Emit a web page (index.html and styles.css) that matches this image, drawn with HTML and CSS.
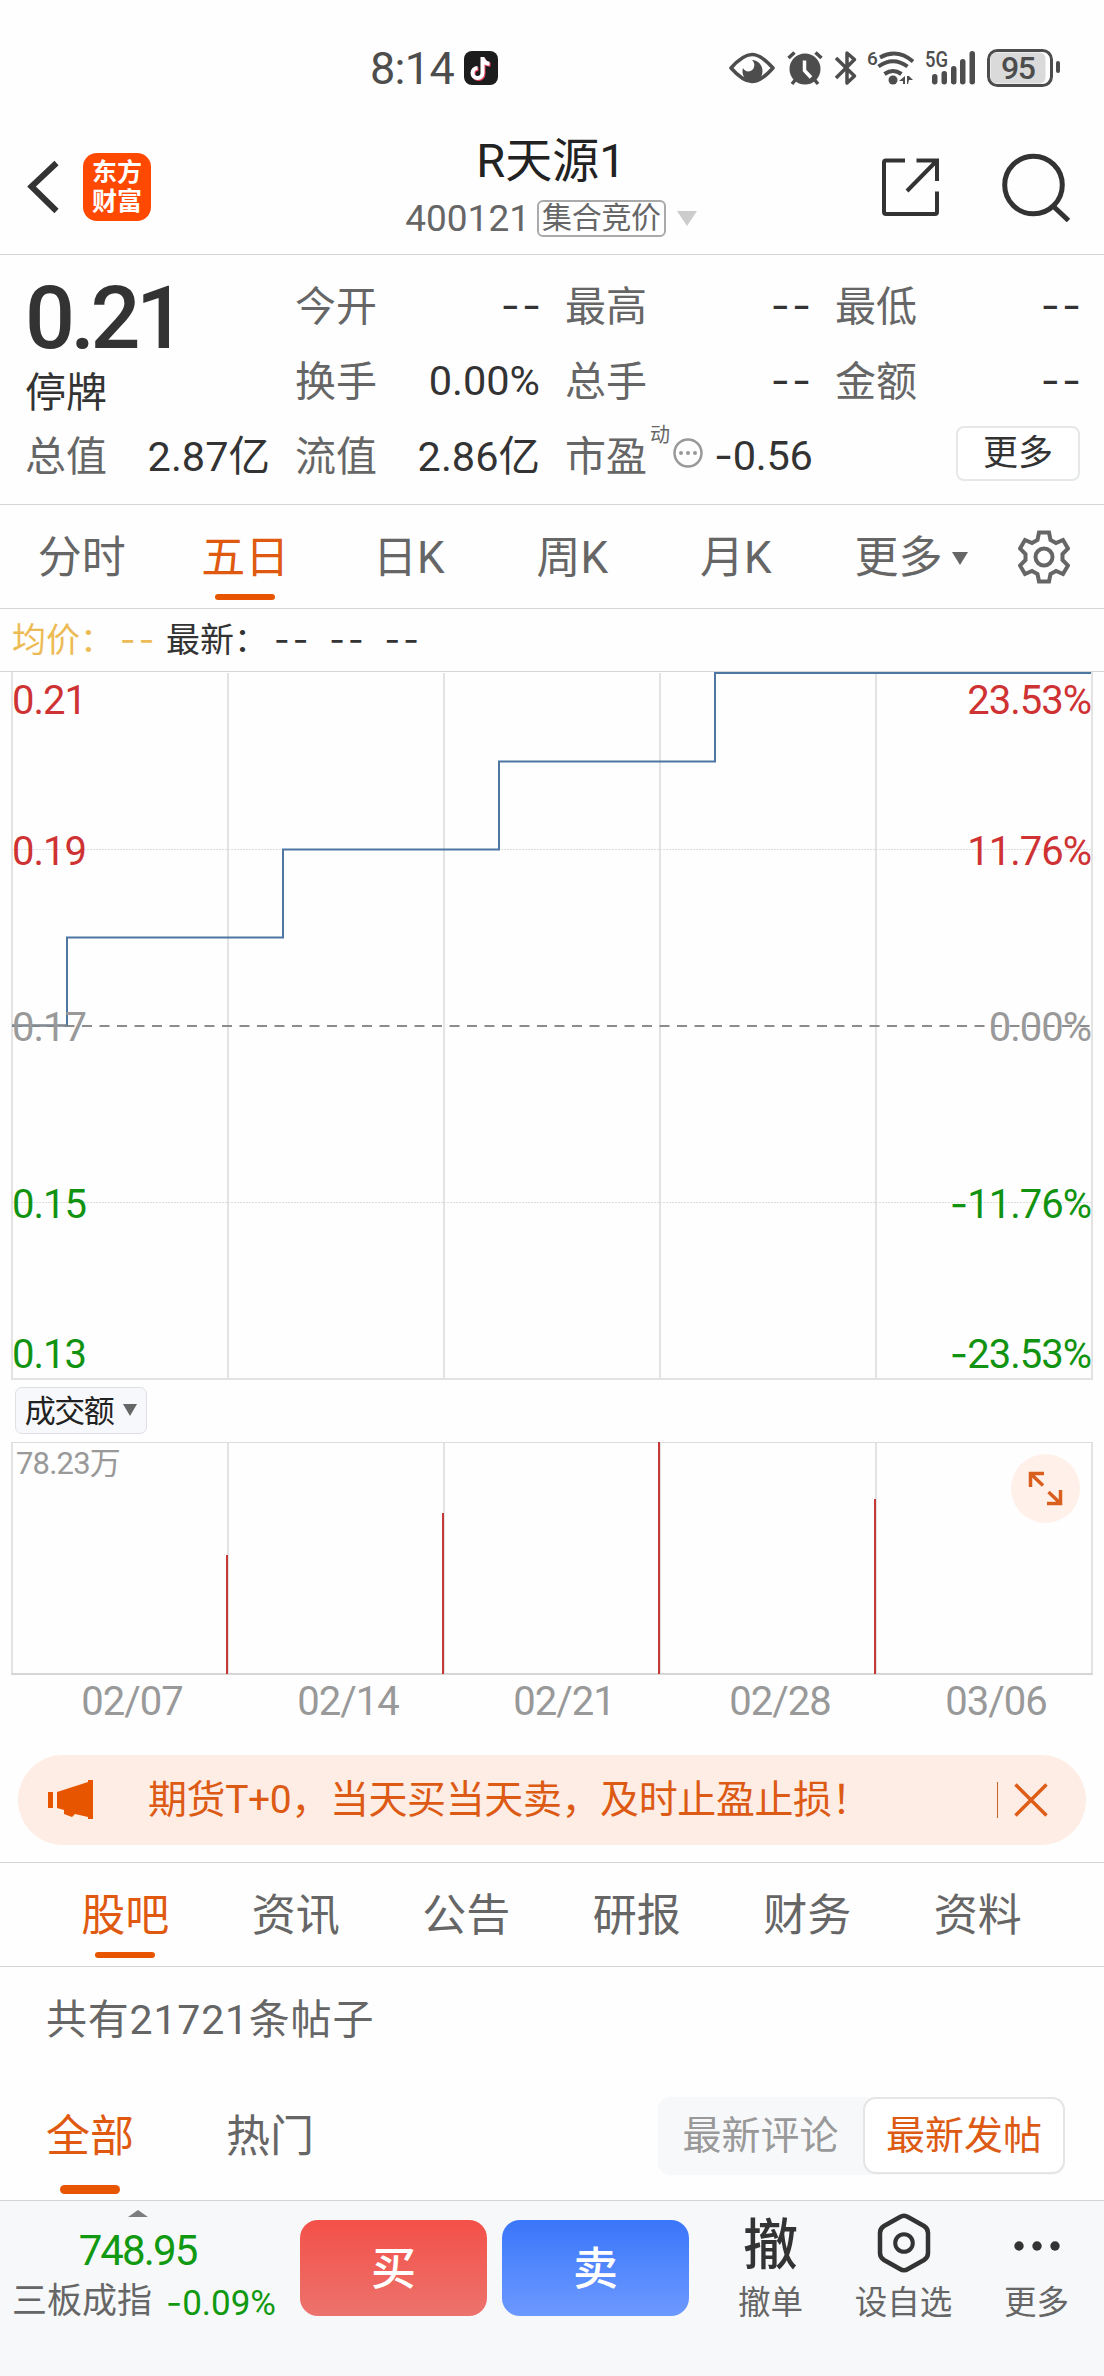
FILE: index.html
```html
<!DOCTYPE html>
<html lang="zh-CN">
<head>
	<meta charset="UTF-8">
	<title>R天源1</title>
	<link rel="stylesheet" href="styles.css">
</head>
<body>
	<div class="status">
		<span class="time">8:14</span>
		<svg class="app-icon" width="34" height="34" viewBox="0 0 34 34">
			<rect width="34" height="34" rx="8" fill="#1c1c1c"/>
			<path d="M18.500 6v16a5 5 0 1 1-5-5M18.500 6.500c.8 4 3.500 6 7 6.200" fill="none" stroke="#e8415a" stroke-width="4" transform="translate(1 1)"/>
			<path d="M18.500 6v16a5 5 0 1 1-5-5M18.500 6.500c.8 4 3.500 6 7 6.200" fill="none" stroke="#fff" stroke-width="4"/>
		</svg>
		<svg class="status-icons" width="334" height="44" viewBox="728 46 334 44">
			<g fill="none" stroke="#4d4d4d" stroke-width="3.500">
				<path d="M731 68c8-9 14-13.500 21-13.500s13 4.500 21 13.500c-8 9-14 13.500-21 13.500S739 77 731 68z" stroke-linejoin="round"/>
				<path d="M788.500 58l6-5.500M821.500 58l-6-5.500M792 84l4-5M818 84l-4-5"/>
				<path d="M836 58l18.500 18-7.500 7V53l7.500 6.500L836 78" stroke-linejoin="round"/>
				<path d="M880 57.500q17-9.500 33 4M878.500 66.500q14.500-10.500 29 0M884.500 74q8.500-6 17 0" stroke-width="4"/>
				<rect x="988.500" y="50.500" width="63" height="35" rx="9" stroke-width="3"/>
			</g>
			<g fill="#4d4d4d">
				<path d="M752 60c4 3.500 2.500 9.500-1.500 11-3 1-6 0-7.500-3-2 6 2 13.500 9.500 13.500 6 0 10-4.500 10-10.500S758 60 752 60z"/>
				<circle cx="805" cy="69" r="15.500"/>
				<circle cx="893" cy="80" r="4.500"/>
				<path d="M899 81l6-5v8h-2v-3zM907 76h2l4 4h-4l-1 4h-1z"/>
				<rect x="932" y="74" width="5.500" height="10.500" rx="2.700"/>
				<rect x="941.500" y="71" width="5.500" height="13.500" rx="2.700"/>
				<rect x="951" y="66" width="5.500" height="18.500" rx="2.700"/>
				<rect x="960" y="59" width="5.500" height="25.500" rx="2.700"/>
				<rect x="969.500" y="51" width="5.500" height="33.500" rx="2.700"/>
				<rect x="1056" y="61" width="4" height="12" rx="2"/>
			</g>
			<path d="M804.500 60.500v10l6.500 7" fill="none" stroke="#fff" stroke-width="3.500"/>
			<rect x="990.500" y="52.500" width="55" height="31" rx="6" fill="#dadada"/>
			<text class="net" x="867" y="65" font-size="19">6</text>
			<text class="net" x="925" y="67" font-size="22" textLength="23" lengthAdjust="spacingAndGlyphs">5G</text>
			<text class="net" x="1001" y="79" font-size="32" textLength="35">95</text>
		</svg>
	</div>

	<div class="header">
		<svg class="back" width="34" height="60" viewBox="26 158 34 60"><path d="M56.500 164L31.500 187.500 56.500 212" fill="none" stroke="#333" stroke-width="6"/></svg>
		<div class="logo">东方<br>财富</div>
		<div class="name">
			<div class="title">R天源1</div>
			<div class="code">400121<span class="tag">集合竞价</span><i class="tri"></i></div>
		</div>
		<svg class="share" width="60" height="62" viewBox="881 156 60 62"><path d="M905 160.500H886a2 2 0 0 0-2 2V212a2 2 0 0 0 2 2h49a2 2 0 0 0 2-2V191.500M916.500 160.500H937V181M937 160.500L907 191" fill="none" stroke="#333" stroke-width="4"/></svg>
		<svg class="search" width="70" height="70" viewBox="1001 151 70 70"><circle cx="1033.500" cy="184" r="28.800" fill="none" stroke="#333" stroke-width="5"/><path d="M1053 205l15.500 14.500" stroke="#333" stroke-width="5"/></svg>
	</div>

	<div class="quote">
		<div class="price">
			<b>0.21</b>
			<span>停牌</span>
		</div>
		<div class="cell"><label>今开</label><span class="num dash">--</span></div>
		<div class="cell"><label>最高</label><span class="num dash">--</span></div>
		<div class="cell"><label>最低</label><span class="num dash">--</span></div>
		<div class="cell"><label>换手</label><span class="num">0.00%</span></div>
		<div class="cell"><label>总手</label><span class="num dash">--</span></div>
		<div class="cell"><label>金额</label><span class="num dash">--</span></div>
		<div class="cell"><label>总值</label><span>2.87亿</span></div>
		<div class="cell"><label>流值</label><span>2.86亿</span></div>
		<div class="cell pe">
			<label>市盈</label><sup>动</sup>
			<svg width="30" height="30" viewBox="0 0 30 30"><circle cx="15" cy="15" r="13.500" fill="none" stroke="#999" stroke-width="2.500"/><g fill="#999"><circle cx="8" cy="15" r="2"/><circle cx="15" cy="15" r="2"/><circle cx="22" cy="15" r="2"/></g></svg>
			<span class="num"><i class="minus">-</i>0.56</span>
		</div>
		<div class="cell"><button class="more">更多</button></div>
	</div>

	<ul class="period">
		<li>分时</li>
		<li class="active">五日</li>
		<li>日K</li>
		<li>周K</li>
		<li>月K</li>
		<li class="last">更多<i class="tri"></i></li>
		<li class="gear">
			<svg width="52" height="54" viewBox="-26 -27 52 54">
				<path d="M-5-24.500H5L6.500-17 12-14 19-17 24-8.500 18.500-3V3L24 8.500 19 17 12 14 6.500 17 5 24.500H-5L-6.500 17-12 14-19 17-24 8.500-18.500 3V-3L-24-8.500-19-17-12-14-6.500-17z" fill="none" stroke="#666" stroke-width="4"/>
				<circle r="8.500" fill="none" stroke="#666" stroke-width="4"/>
			</svg>
		</li>
	</ul>

	<div class="legend">
		<span class="avg">均价：<i class="dash">--</i></span>
		<span class="latest">最新：<i class="dash">--</i><i class="dash">--</i><i class="dash">--</i></span>
	</div>

	<svg class="chart" width="1104" height="708" viewBox="0 672 1104 708">
		<g stroke="#e3e3e3" stroke-width="2">
			<path d="M12 672V1379M228 673V1379M444 673V1379M660 673V1379M876 673V1379M1092 672V1379M11 1379H1093"/>
		</g>
		<path d="M12 849.500H1092M12 1202.500H1092" stroke="#ddd" stroke-width="1" stroke-dasharray="2 1"/>
		<path d="M12 1026H1092" stroke="#8c8c8c" stroke-width="2" stroke-dasharray="10 7.500"/>
		<path d="M12 1025.500H67V937.500H283V849.500H499V761.500H715V673H1091" fill="none" stroke="#4d76a3" stroke-width="2"/>
		<path d="M12 1025.500H67" stroke="#888" stroke-width="2"/>
		<g class="axis">
			<text class="up" x="12" y="714">0.21</text>
			<text class="up" x="12" y="865">0.19</text>
			<text class="flat" x="12" y="1041">0.17</text>
			<text class="down" x="12" y="1218">0.15</text>
			<text class="down" x="12" y="1368">0.13</text>
		</g>
		<g class="axis right">
			<text class="up" x="1091" y="714">23.53%</text>
			<text class="up" x="1091" y="865">11.76%</text>
			<text class="flat" x="1091" y="1041">0.00%</text>
			<text class="down" x="1091" y="1218"><tspan class="minus">-</tspan>11.76%</text>
			<text class="down" x="1091" y="1368"><tspan class="minus">-</tspan>23.53%</text>
		</g>
	</svg>

	<div class="indicator"><button class="pick">成交额<i class="tri"></i></button></div>

	<svg class="chart" width="1104" height="292" viewBox="0 1440 1104 292">
		<path d="M12 1442V1674M228 1442V1674M444 1442V1674M660 1442V1674M876 1442V1674M1092 1442V1674" stroke="#e3e3e3" stroke-width="2"/>
		<path d="M11 1442.500H1093" stroke="#ddd" stroke-width="1"/>
		<path d="M11 1674H1093" stroke="#d6d6d6" stroke-width="2"/>
		<path d="M227 1555V1674M443 1513V1674M659 1442V1674M875 1499V1674" stroke="#c63838" stroke-width="2"/>
		<text class="vol" x="16" y="1474">78.23万</text>
		<circle cx="1045.500" cy="1488.500" r="34.500" fill="#fff1ea"/>
		<path d="M1030.500 1487V1473.500H1044M1031 1474L1043 1485.500M1060.500 1490V1503.500H1047M1060 1503L1048.500 1492" fill="none" stroke="#d95f1e" stroke-width="3.500"/>
		<g class="dates">
			<text x="132" y="1715">02/07</text>
			<text x="348" y="1715">02/14</text>
			<text x="564" y="1715">02/21</text>
			<text x="780" y="1715">02/28</text>
			<text x="996" y="1715">03/06</text>
		</g>
	</svg>

	<div class="notice">
		<svg width="46" height="40" viewBox="47 1780 46 40"><path d="M48 1792h5v16h-5zM57 1792l31-10v-2h5v39h-5v-2l-13-3-3 3-8-3v-4l-7-2z" fill="#e85500"/></svg>
		<p>期货T+0，当天买当天卖，及时止盈止损！</p>
		<i class="bar"></i>
		<svg width="34" height="34" viewBox="0 0 34 34"><path d="M1.500 1.500l31 31M32.500 1.500l-31 31" stroke="#de5d17" stroke-width="3.500"/></svg>
	</div>

	<ul class="section">
		<li class="active">股吧</li>
		<li>资讯</li>
		<li>公告</li>
		<li>研报</li>
		<li>财务</li>
		<li>资料</li>
	</ul>

	<div class="count">共有21721条帖子</div>

	<div class="filter">
		<span class="active">全部</span>
		<span>热门</span>
		<div class="sort">
			<span>最新评论</span>
			<span class="on">最新发帖</span>
		</div>
	</div>

	<div class="footer">
		<div class="index">
			<i class="up-tri"></i>
			<strong>748.95</strong>
			<p>三板成指<em><i class="minus">-</i>0.09%</em></p>
		</div>
		<button class="buy">买</button>
		<button class="sell">卖</button>
		<div class="tool"><b>撤</b><span>撤单</span></div>
		<div class="tool">
			<svg width="54" height="60" viewBox="-27 -30 54 60"><path d="M-4-26q4-2.500 8 0L20-17q4 2.500 4 7V10q0 4.500-4 7L4 26q-4 2.500-8 0L-20 17q-4-2.500-4-7V-10q0-4.500 4-7z" fill="none" stroke="#333" stroke-width="4.500"/><circle r="8.800" fill="none" stroke="#333" stroke-width="4"/></svg>
			<span>设自选</span>
		</div>
		<div class="tool">
			<svg width="54" height="60" viewBox="-27 -30 54 60"><g fill="#333"><circle cx="-18" cy="3" r="4.700"/><circle cy="3" r="4.700"/><circle cx="18" cy="3" r="4.700"/></g></svg>
			<span>更多</span>
		</div>
	</div>
</body>
</html>
```
FILE: styles.css
```css
*{
	box-sizing: border-box;
}
body{
	margin: 0;
	width: 1104px;
	height: 2376px;
	overflow: hidden;
	background: #fefefe;
	color: #333;
	font-family: Roboto, "Noto Sans CJK SC", sans-serif;
	font-size: 41px;
}
ul, p{
	list-style: none; margin: 0; padding: 0;
}
i, em{
	font-style: normal;
}
svg{
	display: block;
	flex: none;
}
button{
	font: inherit;
	color: inherit;
	padding: 0;
	border: 0;
}
.dash, .minus{
	font-family: Inter, sans-serif;
}
.tri{
	border: 8px solid transparent;
	border-top: 13px solid #666;
	border-bottom: 0;
}

.status{
	height: 112px;
	display: flex;
	align-items: center;
	padding: 24px 0 0 370px;
	color: #4d4d4d;
}
.time{
	width: 94px;
	font-size: 45px;
	letter-spacing: -.7px;
}
.status-icons{
	margin-left: 230px;
}
.net{
	fill: #4d4d4d;
	font-weight: 500;
}

.header{
	height: 143px;
	display: flex;
	align-items: center;
	padding: 8px 33px 0 26px;
	border-bottom: 1px solid #d5d5d5;
}
.logo{
	width: 68px;
	height: 68px;
	margin-left: 23px;
	padding-top: 5px;
	border-radius: 14px;
	background: #ff4800;
	color: #fff;
	font-size: 25px;
	font-weight: 700;
	line-height: 29px;
	text-align: center;
}
.name{
	flex: 1;
	margin-left: 70px;
	text-align: center;
}
.title{
	color: #222;
	font-size: 47px;
	line-height: 54px;
}
.code{
	display: flex;
	align-items: center;
	justify-content: center;
	margin-top: 9px;
	color: #666;
	font-size: 37px;
	line-height: 44px;
	white-space: nowrap;
}
.tag{
	height: 37px;
	margin-left: 7px;
	padding: 0 3px;
	border: 2px solid #aaa;
	border-radius: 6px;
	font-size: 30px;
	line-height: 32px;
	letter-spacing: -.3px;
}
.code .tri{
	margin-left: 11px;
	border-width: 15px 10.5px 0;
	border-top-color: #ccc;
}
.search{
	margin-left: 60px;
}

.quote{
	height: 250px;
	display: grid;
	grid-template-columns: repeat(4, 243px);
	grid-auto-rows: 75px;
	column-gap: 27px;
	padding: 10px 0 0 25px;
	border-bottom: 1px solid #d5d5d5;
}
.price{
	grid-row: span 2;
	padding-top: 3px;
	line-height: 50px;
}
.price b{
	display: block;
	font-size: 88px;
	line-height: 100px;
	font-weight: 500;
	letter-spacing: -4.5px;
}
.cell{
	display: flex;
	align-items: center;
	justify-content: space-between;
	white-space: nowrap;
}
.cell label{
	color: #666;
}
.cell > span{
	margin-right: -2px;
	font-size: 41.5px;
}
.cell .num{
	padding-top: 5px;
}
.cell .dash{
	margin-right: -5px;
	letter-spacing: 2px;
}
.pe{
	justify-content: flex-start;
}
.pe sup{
	margin: 0 3px;
	align-self: flex-start;
	color: #666;
	font-size: 20px;
	line-height: 40px;
}
.pe > span{
	margin-left: 11px;
	letter-spacing: -.3px;
}
.more{
	width: 124px;
	height: 55px;
	margin: 2px -2px 0 auto;
	border: 2px solid #e6e8e8;
	border-radius: 8px;
	background: #fff;
	font-size: 35px;
	line-height: 48px;
}

.period{
	height: 104px;
	display: flex;
	color: #666;
	font-size: 44px;
	line-height: 106px;
	text-align: center;
	border-bottom: 1px solid #d5d5d5;
}
.period li{
	width: 163.5px;
}
.active{
	display: flex;
	flex-direction: column;
	align-items: center;
	color: #df5a10;
}
.active::after{
	content: "";
	width: 60px;
	height: 6px;
	margin-top: -17px;
	border-radius: 3px;
	background: #e85500;
}
.period .last{
	width: auto;
	margin-left: 37px;
	display: flex;
	align-items: center;
	height: 106px;
}
.last .tri{
	margin-left: 9px;
}
.period .gear{
	width: auto;
	margin: 25px 0 0 50px;
}

.legend{
	height: 63px;
	display: flex;
	font-size: 34px;
	line-height: 62px;
	padding-left: 12px;
	border-bottom: 1px solid #d5d5d5;
	white-space: nowrap;
}
.avg{
	width: 154px;
	color: #edbb55;
}
.legend .dash{
	margin-right: 18px;
	letter-spacing: 3px;
}
.avg .dash, .latest .dash:first-child{
	margin-left: 6px;
}

.axis text{
	font-size: 40px;
	letter-spacing: -1px;
}
.right{
	text-anchor: end;
}
.up{
	fill: #cf3232;
}
.flat{
	fill: #999;
}
.down{
	fill: #119311;
}
.indicator{
	height: 60px;
	padding: 7px 15px;
}
.pick{
	width: 132px;
	height: 47px;
	display: flex;
	align-items: center;
	justify-content: center;
	padding-bottom: 5px;
	border: 1px solid #dfe0e3;
	border-radius: 7px;
	background: #f7f8fb;
	color: #222;
	font-size: 31px;
	letter-spacing: -1.5px;
}
.pick .tri{
	margin: 4px 0 0 10px;
	border-width: 12px 7px 0;
}
.vol{
	font-size: 31px;
	fill: #999;
	letter-spacing: -.8px;
}
.dates{
	font-size: 40px;
	fill: #999;
	text-anchor: middle;
	letter-spacing: -1px;
}

.notice{
	height: 90px;
	display: flex;
	align-items: center;
	margin: 23px 18px 17px;
	padding: 0 38px 0 29px;
	border-radius: 45px;
	background: #fdede4;
	color: #dc5a14;
	font-size: 39px;
}
.notice p{
	flex: 1;
	margin-left: 55px;
	padding-bottom: 9px;
	letter-spacing: -.4px;
}
.bar{
	width: 1px;
	height: 36px;
	margin-right: 16px;
	background: #c86428;
}

.section{
	height: 105px;
	display: flex;
	padding-left: 40px;
	border-top: 1px solid #d5d5d5;
	border-bottom: 1px solid #d5d5d5;
	color: #666;
	font-size: 44px;
	line-height: 107px;
	text-align: center;
}
.section li{
	width: 170.5px;
}
.section .active::after{
	margin-top: -18px;
}

.count{
	height: 103px;
	padding-left: 46px;
	color: #666;
	line-height: 107px;
	letter-spacing: .8px;
}

.filter{
	height: 130px;
	display: flex;
	padding: 0 39px 0 46px;
	color: #666;
	font-size: 44px;
	line-height: 135px;
}
.filter > span{
	width: 88px;
	margin-right: 92px;
}
.filter > .active::after{
	height: 9px;
	margin-top: -20px;
	border-radius: 5px;
}
.sort{
	height: 78px;
	display: flex;
	margin: 27px 0 0 auto;
	border-radius: 12px;
	background: #f7f8fa;
	color: #999;
	font-size: 39px;
	line-height: 78px;
}
.sort span{
	width: 205px;
	text-align: center;
}
.sort .on{
	width: 202px;
	height: 77px;
	border: 2px solid #e5e5e5;
	border-radius: 13px;
	background: #fff;
	color: #dc5a14;
	line-height: 74px;
}

.footer{
	height: 176px;
	display: flex;
	align-items: flex-start;
	border-top: 1px solid #d3d5d8;
	background: #f6f8fa;
}
.index{
	width: 251px;
	margin: 9px 37px 0 12px;
	text-align: center;
	color: #119911;
}
.up-tri{
	display: block;
	width: 0;
	margin: 0 auto;
	border: 10.5px solid transparent;
	border-top: 0;
	border-bottom: 7px solid #7d7d7d;
}
.index strong{
	display: block;
	margin-top: 9px;
	font-weight: 400;
	font-size: 42px;
	line-height: 50px;
	letter-spacing: -1.9px;
}
.index p{
	display: flex;
	color: #666;
	font-size: 35px;
	line-height: 46px;
	margin-top: 3px;
	white-space: nowrap;
}
.index em{
	margin-left: 14px;
	color: #119911;
}
.buy, .sell{
	width: 187px;
	height: 96px;
	margin: 19px 15px 0 0;
	padding-bottom: 5px;
	border-radius: 18px;
	color: #fff;
	font-size: 45px;
	font-weight: 500;
	background: linear-gradient(#f35049, #ec736c);
}
.sell{
	background: linear-gradient(#3a76fa, #6c99ff);
}
.tool{
	width: 133px;
	display: flex;
	flex-direction: column;
	align-items: center;
	margin-top: 12px;
	color: #666;
	font-size: 32.5px;
	line-height: 44px;
}
.tool b{
	height: 60px;
	color: #333;
	font-size: 55px;
	font-weight: 500;
	line-height: 65px;
}
.tool span{
	margin-top: 8px;
}
```
